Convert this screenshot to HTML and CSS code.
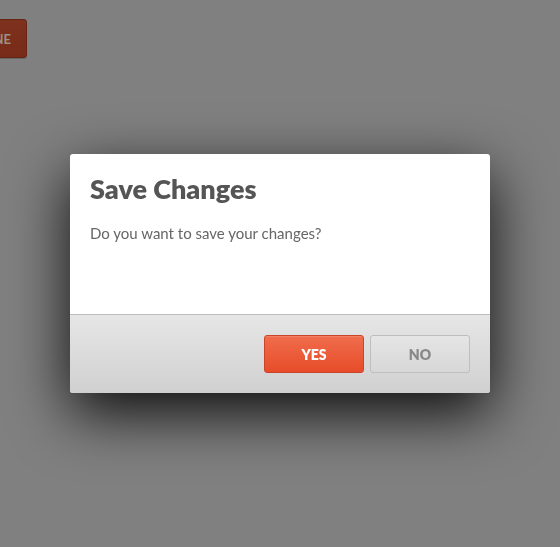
FILE: index.html
```html
<!DOCTYPE html>
<html>
<head>
<meta charset="utf-8">
<link rel="stylesheet" href="styles.css">
</head>
<body>
  <div class="page">
    <button class="trigger">DONE</button>
  </div>
  <div class="overlay">
    <div class="dialog">
      <div class="dialog-body">
        <h1 class="dialog-title">Save Changes</h1>
        <p class="dialog-text">Do you want to save your changes?</p>
      </div>
      <div class="dialog-footer">
        <button class="btn btn-yes">YES</button>
        <button class="btn btn-no">NO</button>
      </div>
    </div>
  </div>
</body>
</html>
```

FILE: styles.css
```css
html, body {
  margin: 0;
  padding: 0;
  height: 100%;
}
body {
  background: #808080;
  font-family: Lato, "Open Sans", sans-serif;
}
.page {
  padding-top: 19px;
}
.trigger {
  display: block;
  margin-left: -35px;
  width: 62px;
  height: 39px;
  background: linear-gradient(#7e311d, #772b18);
  border: 1px solid #652313;
  border-radius: 3px;
  color: #999087;
  font-family: Lato, sans-serif;
  font-weight: 700;
  font-size: 13px;
  text-align: left;
  padding: 0 0 0 7px;
  box-shadow: 0 1px 0 rgba(0,0,0,0.2);
}
.overlay {
  position: fixed;
  inset: 0;
  display: flex;
  align-items: center;
  justify-content: center;
}
.dialog {
  width: 420px;
  background: #fff;
  border-radius: 3px;
  overflow: hidden;
  box-shadow: 0 20px 60px rgba(0,0,0,0.9);
}
.dialog-body {
  height: 160px;
  box-sizing: border-box;
  padding: 18px 20px 0;
}
.dialog-title {
  margin: 0;
  font-size: 27px;
  line-height: 34px;
  font-weight: 800;
  color: #555555;
}
.dialog-text {
  margin: 17px 0 0;
  font-size: 15px;
  line-height: 20px;
  color: #666666;
}
.dialog-footer {
  border-top: 1px solid #bcbcbc;
  background: linear-gradient(#e6e6e6, #d0d0d0);
  display: flex;
  justify-content: flex-end;
  gap: 6px;
  padding: 20px 20px 20px;
}
.btn {
  width: 100px;
  height: 38px;
  border-radius: 3px;
  font-family: Lato, sans-serif;
  font-weight: 800;
  font-size: 14px;
  padding: 0;
  cursor: pointer;
}
.btn-yes {
  background: linear-gradient(#f06d4c, #e74c29);
  border: 1px solid #c9452a;
  color: #ffffff;
  box-shadow: inset 0 1px 0 rgba(255,255,255,0.15);
}
.btn-no {
  background: linear-gradient(#e5e5e5, #d7d7d7);
  border: 1px solid #bfbfbf;
  color: #888888;
}
```
